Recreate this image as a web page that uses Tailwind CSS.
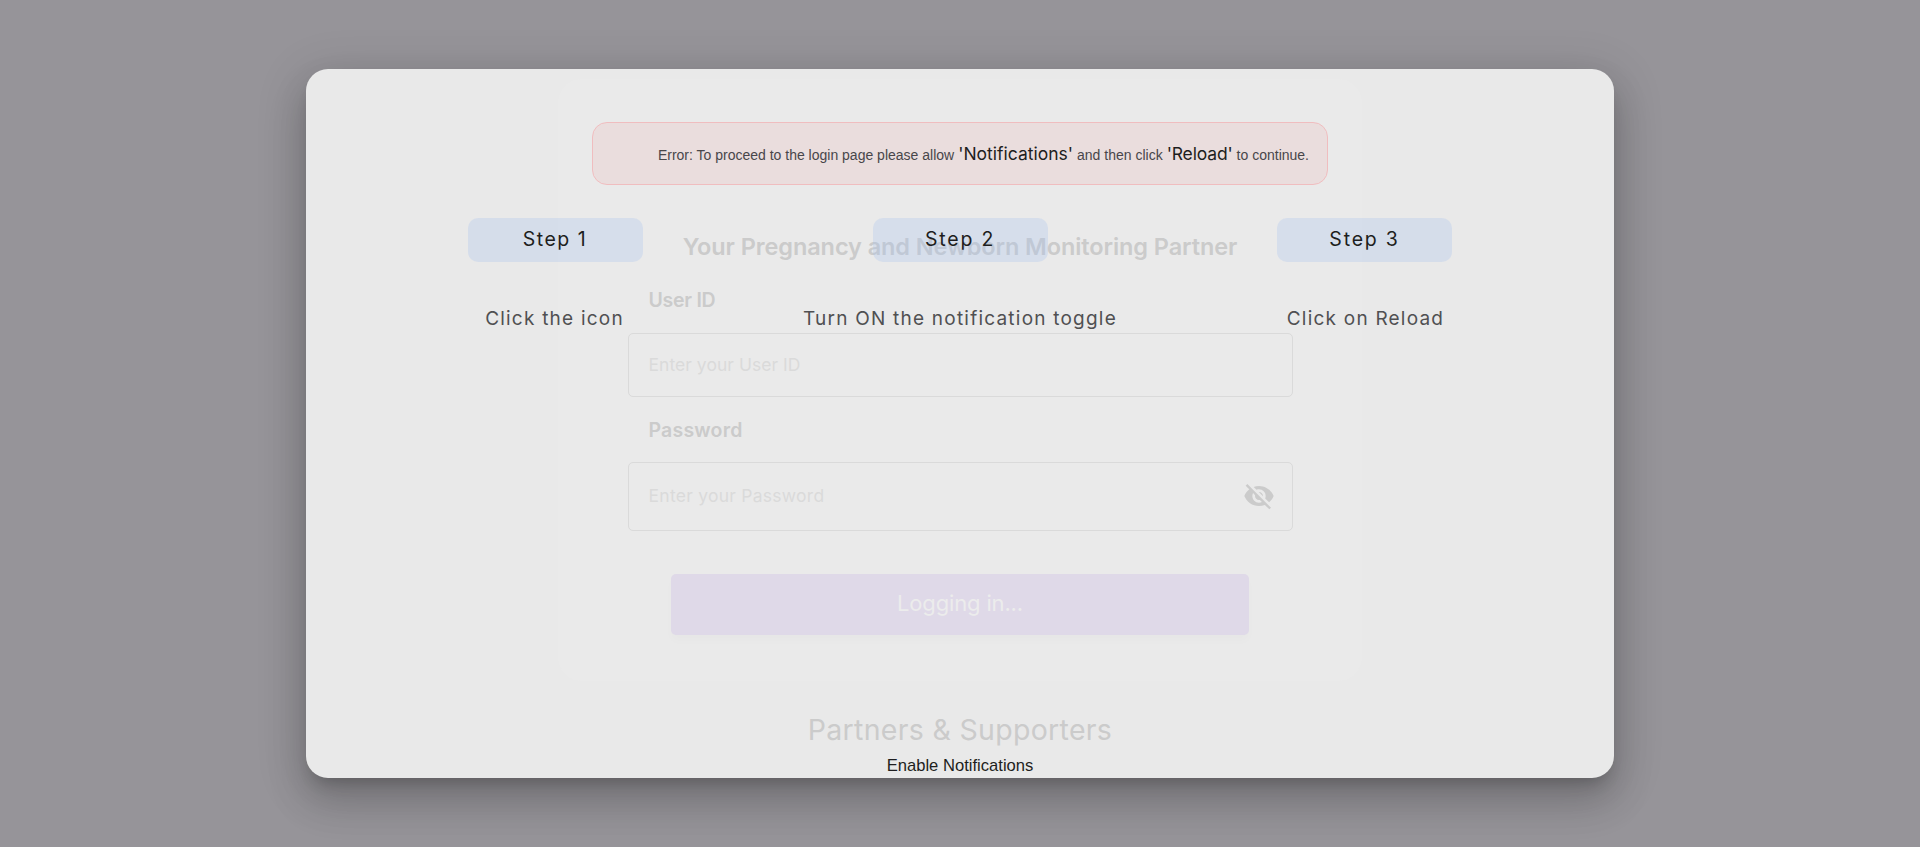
<!DOCTYPE html>
<html lang="en">
<head>
<meta charset="utf-8">
<title>Enable Notifications</title>
<script src="https://cdn.jsdelivr.net/npm/@tailwindcss/browser@4"></script>
</head>
<body class="flex h-[847px] justify-center overflow-hidden bg-[#969499] pt-[69px] font-['Inter',sans-serif]">
<div class="grid h-[709px] w-[1308px] grid-cols-1 grid-rows-1 overflow-hidden rounded-[22px] bg-[#e9e9e9] shadow-[0_11px_15px_-7px_rgba(0,0,0,0.2),0_24px_38px_3px_rgba(0,0,0,0.14),0_9px_46px_8px_rgba(0,0,0,0.12)]">

  <!-- Login page, faded -->
  <div class="col-start-1 row-start-1 flex flex-col items-center pt-[10px] text-[#cbcbcb]">
    <main class="flex h-[602px] w-[804px] shrink-0 flex-col items-center rounded-[24px] bg-[#eaeaea] pt-[150px]">
      <h1 class="h-[36px] text-[23.5px] leading-[36px] font-semibold tracking-[-0.08px] whitespace-nowrap">Your Pregnancy and Newborn Monitoring Partner</h1>
      <form class="flex w-[665px] flex-col">
        <label class="mt-[20px] h-[30px] pl-[21px] text-[19.5px] leading-[30px] font-semibold tracking-[-0.26px]">User ID</label>
        <div class="mt-[18px] flex h-[64px] items-center rounded-[5px] border border-[#dadada] pl-[20px] text-[17.5px] tracking-[0.04px] text-[#dadada]">Enter your User ID</div>
        <label class="mt-[18px] h-[30px] pl-[21px] text-[19.5px] leading-[30px] font-semibold tracking-[0.2px]">Password</label>
        <div class="mt-[17px] flex h-[69px] items-center justify-between rounded-[5px] border border-[#dadada] pr-[17px] pl-[20px] text-[17.5px] tracking-[0.26px] text-[#dadada]">Enter your Password
          <svg class="mb-[2px] size-8 text-[#cbcbcb]" viewBox="0 0 24 24" fill="currentColor"><path d="M12 7c2.76 0 5 2.24 5 5 0 .65-.13 1.26-.36 1.83l2.92 2.92c1.51-1.26 2.7-2.89 3.43-4.75-1.73-4.39-6-7.5-11-7.5-1.4 0-2.74.25-3.98.7l2.16 2.16C10.74 7.13 11.35 7 12 7zM2 4.27l2.28 2.28.46.46C3.08 8.3 1.78 10.02 1 12c1.73 4.39 6 7.5 11 7.5 1.55 0 3.03-.3 4.38-.84l.42.42L19.73 22 21 20.73 3.27 3 2 4.27zM7.53 9.8l1.55 1.55c-.05.21-.08.43-.08.65 0 1.66 1.34 3 3 3 .22 0 .44-.03.65-.08l1.55 1.55c-.67.33-1.41.53-2.2.53-2.76 0-5-2.24-5-5 0-.79.2-1.53.53-2.2zm4.31-.78l3.15 3.15.02-.16c0-1.66-1.34-3-3-3l-.17.01z"/></svg>
        </div>
        <div class="mt-[43px] flex h-[61px] w-[578px] items-center justify-center self-center rounded-[5px] bg-[#dfd9e8] pb-[2px] text-[22px] tracking-[-0.16px] text-[#ececec] shadow-[0_6px_8px_rgba(0,0,0,0.015)]">Logging in...</div>
      </form>
    </main>
    <h2 class="mt-[28px] text-[28.5px] leading-[42px] tracking-[0.3px]">Partners &amp; Supporters</h2>
  </div>

  <!-- Notification instructions -->
  <div class="col-start-1 row-start-1 flex flex-col items-center pt-[53px] text-[#1e1e20]">
    <div class="flex h-[63px] w-[736px] shrink-0 items-center justify-end rounded-[15px] border border-[#f0bdbf] bg-[#eadddd] pt-[2px] pr-[18px]">
      <p class="flex items-baseline gap-[4px] font-['Liberation_Sans',sans-serif] text-[14px] whitespace-nowrap text-[#48464a]">
        <span>Error: To proceed to the login page please allow</span>
        <span class="font-['Inter',sans-serif] text-[17.5px] text-[#1e1e20]">'Notifications'</span>
        <span>and then click</span>
        <span class="font-['Inter',sans-serif] text-[17.5px] tracking-[-0.15px] text-[#1e1e20]">'Reload'</span>
        <span>to continue.</span>
      </p>
    </div>
    <div class="mt-[33px] grid w-[1310px] grid-cols-[175px_175px_175px] justify-center gap-x-[229.5px] text-center">
      <div class="flex h-[44px] items-center justify-center rounded-[10px] bg-[#a9c3ee]/30 pr-[1px] text-[19.5px] tracking-[1.5px]">Step 1</div>
      <div class="flex h-[44px] items-center justify-center rounded-[10px] bg-[#a9c3ee]/30 text-[19.5px] tracking-[1.8px]">Step 2</div>
      <div class="flex h-[44px] items-center justify-center rounded-[10px] bg-[#a9c3ee]/30 text-[19.5px] tracking-[1.8px]">Step 3</div>
    </div>
    <div class="mt-[43px] grid w-[1310px] grid-cols-[175px_350px_175px] justify-center gap-x-[142px] text-center text-[19px] leading-[28px] tracking-[1.22px] whitespace-nowrap text-[#505052]">
      <p class="pr-[2px]">Click the icon</p>
      <p>Turn ON the notification toggle</p>
      <p class="pl-[2px]">Click on Reload</p>
    </div>
    <button class="mt-auto h-[24px] font-['Liberation_Sans',sans-serif] text-[16.6px] leading-[24px]">Enable Notifications</button>
  </div>
</div>
</body>
</html>
